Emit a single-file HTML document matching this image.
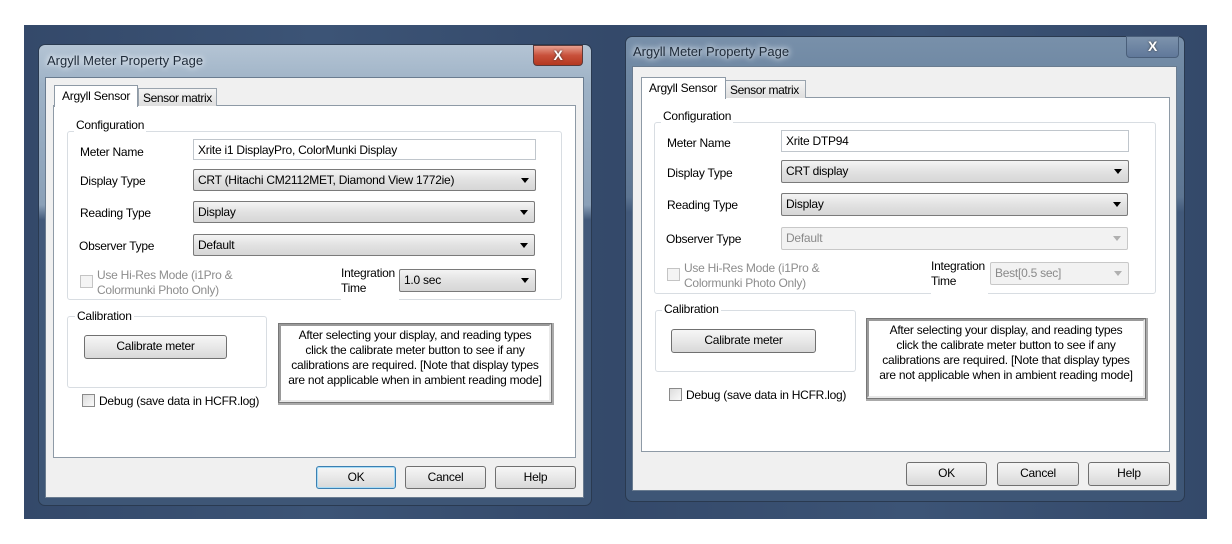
<!DOCTYPE html>
<html><head><meta charset="utf-8">
<style>
*{box-sizing:border-box;margin:0;padding:0}
body{width:1232px;height:544px;background:#fff;position:relative;overflow:hidden;font-family:"Liberation Sans",sans-serif;font-size:12px;color:#000;letter-spacing:-0.25px}
.a{position:absolute;white-space:nowrap}
.bg{background:linear-gradient(90deg,#34496a,#3c5476 50%,#34496a)}
.frame{border-radius:7px;border:1px solid #2a3a50;background:linear-gradient(180deg,#b4c4d4 0,#9eb2c6 40px,#8aa0b8 160px,#42597a 175px,#3e5676 100%)}
.frame.in{background:linear-gradient(180deg,#7890aa 0,#6e87a2 40px,#5d7592 160px,#42597a 175px,#3e5676 100%)}
.title{font-size:13px;color:#1e2a38;text-shadow:0 0 6px #fff,0 0 8px #dfe8f2;letter-spacing:0}
.client{background:#f0f0f0;border:1px solid #6a7c90}
.panel{background:#fff;border:1px solid #8e9aa6}
.tab{background:#fff;border:1px solid #8e9aa6;border-bottom:none;padding:3px 0 0 7px;font-size:12px}
.tab2{background:linear-gradient(#f4f4f4,#dedede);border:1px solid #9aa4ae;border-bottom:none;padding:2px 0 0 4px;letter-spacing:-0.4px}
.grp{border:1px solid #d8dde2;border-radius:3px}
.gl{background:#fff;padding:0 2px;line-height:13px}
.field{background:#fff;border:1px solid #c0c6cc;padding:3px 0 0 4px}
.combo{background:linear-gradient(#f4f4f4,#e2e2e2 50%,#d6d6d6);border:1px solid #7a7a7a;border-radius:2px;padding:3px 0 0 4px}
.combo:after{content:"";position:absolute;right:6px;top:8px;border:4px solid transparent;border-top:5px solid #000}
.combo.dis{background:#f2f2f2;border-color:#c8c8c8;color:#8a8a8a}
.combo.dis:after{border-top-color:#b0b0b0}
.cb{width:13px;height:13px;border:1px solid #8a8a8a;background:linear-gradient(135deg,#dcdcdc,#fafafa)}
.cb.dis{border-color:#c4c4c4;background:#f4f4f4}
.dis{color:#8d8d8d}
.btn{background:linear-gradient(#f6f6f6,#e8e8e8 50%,#d8d8d8);border:1px solid #707070;border-radius:3px;text-align:center;line-height:21px}
.btn.def{border-color:#3c7fb1;box-shadow:inset 0 0 0 1px #a8dcf6}
.info{background:#fff;border:2px solid;border-color:#9a9a9a #e8e8e8 #e8e8e8 #9a9a9a;box-shadow:0 0 0 1px #777, 1px 1px 0 2px #aaa;text-align:center;font-size:12px;line-height:15px;padding-top:2px}
.close{border:1px solid #5a3a3a;border-radius:0 0 4px 4px;color:#fff;font-weight:bold;text-align:center;font-size:14px;line-height:18px;text-shadow:0 0 2px #333}
</style></head><body>
<div class="a bg" style="left:24px;top:25px;width:589px;height:494px"></div>
<div class="a bg" style="left:613px;top:25px;width:594px;height:494px"></div>

<!-- LEFT DIALOG -->
<div class="a frame" style="left:38px;top:44px;width:554px;height:462px"></div>
<div class="a title" style="left:47px;top:53px">Argyll Meter Property Page</div>
<div class="a close" style="left:533px;top:45px;width:50px;height:21px;background:linear-gradient(#e8a090,#c8503a 50%,#b43820)">X</div>
<div class="a client" style="left:45px;top:77px;width:539px;height:421px"></div>
<div class="a panel" style="left:53px;top:105px;width:523px;height:353px"></div>
<div class="a tab2" style="left:138px;top:88px;width:79px;height:18px">Sensor matrix</div>
<div class="a tab" style="left:54px;top:85px;width:84px;height:22px">Argyll Sensor</div>
<div class="a grp" style="left:67px;top:131px;width:495px;height:169px"></div>
<div class="a gl" style="left:74px;top:119px">Configuration</div>
<div class="a" style="left:80px;top:145px">Meter Name</div>
<div class="a field" style="left:193px;top:139px;width:343px;height:21px">Xrite i1 DisplayPro, ColorMunki Display</div>
<div class="a" style="left:80px;top:174px">Display Type</div>
<div class="a combo" style="left:193px;top:169px;width:343px;height:22px">CRT (Hitachi CM2112MET, Diamond View 1772ie)</div>
<div class="a" style="left:80px;top:206px">Reading Type</div>
<div class="a combo" style="left:193px;top:201px;width:342px;height:22px">Display</div>
<div class="a" style="left:79px;top:239px">Observer Type</div>
<div class="a combo" style="left:193px;top:234px;width:342px;height:22px">Default</div>
<div class="a cb dis" style="left:80px;top:275px"></div>
<div class="a dis" style="left:97px;top:268px;line-height:15px">Use Hi-Res Mode (i1Pro &amp;<br>Colormunki Photo Only)</div>
<div class="a" style="left:341px;top:266px;line-height:15px;background:#fff;padding-right:4px;height:36px">Integration<br>Time</div>
<div class="a combo" style="left:399px;top:269px;width:137px;height:23px">1.0 sec</div>
<div class="a grp" style="left:67px;top:316px;width:200px;height:72px"></div>
<div class="a gl" style="left:75px;top:310px">Calibration</div>
<div class="a btn" style="left:84px;top:335px;width:143px;height:24px">Calibrate meter</div>
<div class="a info" style="left:279px;top:324px;width:272px;height:78px">After selecting your display, and reading types<br>click the calibrate meter button to see if any<br>calibrations are required. [Note that display types<br>are not applicable when in ambient reading mode]</div>
<div class="a cb" style="left:82px;top:394px"></div>
<div class="a" style="left:99px;top:394px">Debug (save data in HCFR.log)</div>
<div class="a btn def" style="left:316px;top:466px;width:80px;height:23px">OK</div>
<div class="a btn" style="left:405px;top:466px;width:81px;height:23px">Cancel</div>
<div class="a btn" style="left:495px;top:466px;width:81px;height:23px">Help</div>

<!-- RIGHT DIALOG -->
<div class="a frame in" style="left:625px;top:36px;width:560px;height:466px"></div>
<div class="a title" style="left:633px;top:44px">Argyll Meter Property Page</div>
<div class="a close" style="left:1126px;top:36px;width:53px;height:22px;background:linear-gradient(#7d93ac,#60789a);border-color:#4a5f7a">X</div>
<div class="a client" style="left:632px;top:66px;width:545px;height:425px"></div>
<div class="a panel" style="left:641px;top:97px;width:529px;height:355px"></div>
<div class="a tab2" style="left:725px;top:80px;width:81px;height:18px">Sensor matrix</div>
<div class="a tab" style="left:641px;top:77px;width:85px;height:22px">Argyll Sensor</div>
<div class="a grp" style="left:654px;top:122px;width:502px;height:172px"></div>
<div class="a gl" style="left:661px;top:110px">Configuration</div>
<div class="a" style="left:667px;top:136px">Meter Name</div>
<div class="a field" style="left:781px;top:130px;width:348px;height:22px">Xrite DTP94</div>
<div class="a" style="left:667px;top:166px">Display Type</div>
<div class="a combo" style="left:781px;top:160px;width:348px;height:23px">CRT display</div>
<div class="a" style="left:667px;top:198px">Reading Type</div>
<div class="a combo" style="left:781px;top:193px;width:347px;height:23px">Display</div>
<div class="a" style="left:666px;top:232px">Observer Type</div>
<div class="a combo dis" style="left:781px;top:227px;width:347px;height:23px">Default</div>
<div class="a cb dis" style="left:667px;top:268px"></div>
<div class="a dis" style="left:684px;top:261px;line-height:15px">Use Hi-Res Mode (i1Pro &amp;<br>Colormunki Photo Only)</div>
<div class="a" style="left:931px;top:259px;line-height:15px;background:#fff;padding-right:3px;height:37px">Integration<br>Time</div>
<div class="a combo dis" style="left:990px;top:262px;width:139px;height:23px">Best[0.5 sec]</div>
<div class="a grp" style="left:655px;top:310px;width:201px;height:62px"></div>
<div class="a gl" style="left:662px;top:303px">Calibration</div>
<div class="a btn" style="left:671px;top:329px;width:145px;height:24px">Calibrate meter</div>
<div class="a info" style="left:867px;top:319px;width:278px;height:79px">After selecting your display, and reading types<br>click the calibrate meter button to see if any<br>calibrations are required. [Note that display types<br>are not applicable when in ambient reading mode]</div>
<div class="a cb" style="left:669px;top:388px"></div>
<div class="a" style="left:686px;top:388px">Debug (save data in HCFR.log)</div>
<div class="a btn" style="left:906px;top:462px;width:81px;height:24px">OK</div>
<div class="a btn" style="left:997px;top:462px;width:82px;height:24px">Cancel</div>
<div class="a btn" style="left:1088px;top:462px;width:82px;height:24px">Help</div>
</body></html>
